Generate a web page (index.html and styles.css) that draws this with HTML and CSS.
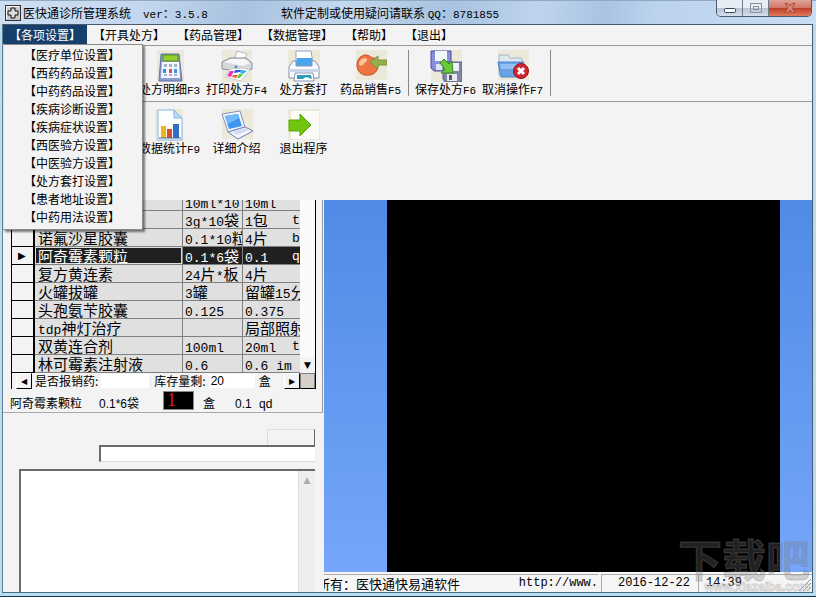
FILE: index.html
```
<!DOCTYPE html>
<html lang="zh-CN">
<head>
    <meta charset="UTF-8">
    <meta name="viewport" content="width=device-width, initial-scale=1.0">
    <title>医快通诊所管理系统</title>
    <link rel="stylesheet" href="styles.css">
</head>
<body>
    <div class="window">
        <header class="titlebar">
            <svg class="app-icon" viewBox="0 0 16 16">
                <rect x="0.5" y="0.5" width="15" height="15" fill="#c9c9c9" stroke="#333"/>
                <path d="M1.500 14V1.500H14" fill="none" stroke="#fff"/>
                <path d="M6 3h4v3h3v4h-3v3H6v-3H3V6h3z" fill="#ddd" stroke="#111"/>
            </svg>
            <h1>医快通诊所管理系统</h1>
            <span class="version"><span class="n">ver</span>：<span class="n">3.5.8</span></span>
            <span class="contact">软件定制或使用疑问请联系 <span class="n">QQ</span>：<span class="n">8781855</span></span>
            <div class="controls">
                <button class="ctl" aria-label="最小化">
                    <svg width="14" height="16" viewBox="0 0 14 16"><rect x="1.500" y="8.500" width="11" height="4" rx="1" fill="#fff" stroke="#3a4560"/></svg>
                </button>
                <button class="ctl" aria-label="最大化">
                    <svg width="14" height="16" viewBox="0 0 14 16"><g fill="none" stroke="#8a939d"><rect x="1.500" y="3.500" width="11" height="9"/><rect x="4.500" y="6.500" width="5" height="3"/></g></svg>
                </button>
                <button class="ctl ctl-close" aria-label="关闭">
                    <svg width="14" height="16" viewBox="0 0 14 16"><path d="M2 3.500h3l2 2.500 2-2.500h3L9 8l3 4.500H9L7 10l-2 2.500H2L5 8z" fill="#d98678" stroke="#b04a3c"/></svg>
                </button>
            </div>
        </header>

        <nav class="menubar">
            <div class="menu-root">
                <button class="menu active">【各项设置】</button>
                <div class="dropdown">
                    <button>【医疗单位设置】</button>
                    <button>【西药药品设置】</button>
                    <button>【中药药品设置】</button>
                    <button>【疾病诊断设置】</button>
                    <button>【疾病症状设置】</button>
                    <button>【西医验方设置】</button>
                    <button>【中医验方设置】</button>
                    <button>【处方套打设置】</button>
                    <button>【患者地址设置】</button>
                    <button>【中药用法设置】</button>
                </div>
            </div>
            <button class="menu">【开具处方】</button>
            <button class="menu">【药品管理】</button>
            <button class="menu">【数据管理】</button>
            <button class="menu">【帮助】</button>
            <button class="menu">【退出】</button>
        </nav>

        <div class="toolbar">
            <button class="tool">
                <svg viewBox="0 0 32 32">
                    <rect x="3" width="27" height="32" fill="#ece9da"/>
                    <path d="M7 4h18l3 27H5z" fill="#8d9ccb" stroke="#6272a5"/>
                    <path d="M8 12h17l1 16H7z" fill="#f4f6ff"/>
                    <rect x="9" y="5" width="15" height="6" fill="#8ecf2e" stroke="#5a9420"/>
                    <g fill="#a9b2c8"><path d="M10 14h3v3h-3zM15 14h3v3h-3zM20 14h3v3h-3zM10 24h3v2h-3zM15 24h3v2h-3zM20 24h3v2h-3z"/></g>
                    <path d="M9 19h3v4H9z" fill="#2f8fe0"/><path d="M15 19h3v4h-3z" fill="#e0563a"/><path d="M20 19h3v4h-3z" fill="#3b9adf"/>
                </svg>
                <span>处方明细<span class="n">F3</span></span>
            </button>
            <button class="tool">
                <svg viewBox="0 0 32 32">
                    <rect x="1" width="30" height="32" fill="#ece9da"/>
                    <path d="M13 11l3-10 10 3-5 10z" fill="#fdfdff" stroke="#b7b7c2"/>
                    <path d="M1 12l8-4h16l6 5v6l-7 3-23-3z" fill="#d7d8dc" stroke="#8a8b92"/>
                    <path d="M3 12l7-3h14l5 4-7 3z" fill="#f6f6f6"/>
                    <circle cx="15" cy="17" r="1.500" fill="#3aa0a0"/>
                    <path d="M9 19l13-1 7 2-9 11-16-4z" fill="#fff" stroke="#c9c9c9"/>
                    <path d="M9 21l4 0-3 6-4-1z" fill="#e33cb5"/><path d="M14 20l7 0-2 2-6 1z" fill="#3c54e8"/><path d="M21 20l5 1-4 3-3-1z" fill="#2bb6e8"/><path d="M22 24l-3 4-3 0 2-4z" fill="#4ed43a"/><path d="M12 25l5 0-2 3-4-1z" fill="#f1602e"/>
                </svg>
                <span>打印处方<span class="n">F4</span></span>
            </button>
            <button class="tool">
                <svg viewBox="0 0 32 32">
                    <rect width="32" height="31" fill="#ece9da"/>
                    <path d="M8 1h15l2 12H8z" fill="#fff" stroke="#8fa6c8"/>
                    <path d="M9 8h15v9H7z" fill="#49a3ee"/>
                    <path d="M1 17l4-6h3v5h16v-5h3l4 6v11H1z" fill="#f7faff" stroke="#8794b3"/>
                    <path d="M1 19h30v3H1z" fill="#cbd5e8"/>
                    <path d="M7 23h18l1 8H6z" fill="#fff" stroke="#8794b3"/>
                    <path d="M9 25h14l1 4-6-2-3 2-6 0z" fill="#2f9bb8"/>
                </svg>
                <span>处方套打</span>
            </button>
            <button class="tool">
                <svg viewBox="0 0 32 32">
                    <rect x="1" width="31" height="30" fill="#ece9da"/>
                    <path d="M2 15c0-6 4-10 9-10 4 0 5 3 7 3 4 0 5 3 5 7 0 6-4 10-9 10C6 26 2 21 2 15z" fill="#ee7443" stroke="#c94a22"/>
                    <path d="M4 13c1-4 5-6 8-4 1 3-3 3-4 6-2 1-4 1-4-2z" fill="#ffc7a0"/>
                    <path d="M15 12l8-6v4h9v5h-9v4z" fill="#93b04c" stroke="#7c973d"/>
                </svg>
                <span>药品销售<span class="n">F5</span></span>
            </button>
            <i class="sep"></i>
            <button class="tool">
                <svg viewBox="0 0 32 32">
                    <rect x="1" width="31" height="32" fill="#ece9da"/>
                    <path d="M1 1h20v20H4l-3-3z" fill="#8a90d8" stroke="#454ba0"/>
                    <path d="M5 1h12v10H5z" fill="#f3f8ff"/><path d="M6 14h9v6H6z" fill="#dfe3f4"/>
                    <path d="M13 12h19v20H15l-2-3z" fill="#8286a6" stroke="#5b5f85"/>
                    <path d="M19 13h10v8H19z" fill="#eef1f8"/><path d="M17 24h10v7H17z" fill="#e8e8ee"/><path d="M19 25h3v5h-3z" fill="#555a7c"/>
                    <path d="M10 13l4-4 5 5 3-3 1 12H11l4-4z" fill="#67c93a" stroke="#37891c"/>
                </svg>
                <span>保存处方<span class="n">F6</span></span>
            </button>
            <button class="tool">
                <svg viewBox="0 0 32 32">
                    <rect x="1" width="31" height="30" fill="#ece9da"/>
                    <path d="M2 5h9l2 3h12v17H2z" fill="#dfe7f1" stroke="#a8b6c8"/>
                    <path d="M1 12h26l-3 15H4z" fill="#6aa2e6" stroke="#4d84cc"/>
                    <path d="M3 14h22l-1 5H4z" fill="#92c0f3"/>
                    <circle cx="24" cy="21" r="7.500" fill="#cf2431" stroke="#8f1420"/>
                    <path d="M21 18l6 6M27 18l-6 6" stroke="#fff" stroke-width="3"/>
                </svg>
                <span>取消操作<span class="n">F7</span></span>
            </button>
            <i class="sep"></i>
        </div>

        <div class="toolbar toolbar-second">
            <button class="tool">
                <svg viewBox="0 0 32 32">
                    <rect x="1" width="28" height="32" fill="#ece9da"/>
                    <path d="M4 1h16l8 8v22H4z" fill="#fbfdff" stroke="#86b7e6"/>
                    <path d="M20 1v8h8z" fill="#b8dbf8" stroke="#86b7e6"/>
                    <path d="M7 17h5v12H7z" fill="#f0b41c"/><path d="M13 20h5v9h-5z" fill="#e0492f"/><path d="M19 15h6v14h-6z" fill="#2f6fc8"/>
                    <path d="M5 29h22" stroke="#4a6c9a"/>
                </svg>
                <span>数据统计<span class="n">F9</span></span>
            </button>
            <button class="tool">
                <svg viewBox="0 0 32 32">
                    <rect x="1" width="31" height="30" fill="#ece9da"/>
                    <path d="M1 5l18-3 5 16-17 5z" fill="#f1f5fd" stroke="#8392bf"/>
                    <path d="M4 7l13-2 4 12-13 3z" fill="#3d97ee"/>
                    <path d="M4 7l13-2 1 4-11 6z" fill="#73bbf8"/>
                    <path d="M7 23l17-5 8 4-15 8z" fill="#f4f7ff" stroke="#6f80b4"/>
                    <path d="M11 23l13-4 4 2-12 5z" fill="#d3dcf0"/>
                </svg>
                <span>详细介绍</span>
            </button>
            <button class="tool">
                <svg viewBox="0 0 32 32">
                    <rect width="32" height="31" fill="#ece9da"/>
                    <rect x="3" y="2" width="28" height="28" fill="#fbfcf9"/>
                    <path d="M1 11h11V5l11 11-11 11v-5H1z" fill="#72c50e" stroke="#5aa50a"/>
                </svg>
                <span>退出程序</span>
            </button>
        </div>

        <main>
            <section class="left">
                <div class="group">
                    <div class="grid-box">
                        <div class="grid-view">
                            <table>
                                <tbody>
                                    <tr><td class="mark"></td><td></td><td><span class="n">10ml*10</span></td><td><span class="n">10ml</span></td></tr>
                                    <tr><td class="mark"></td><td></td><td><span class="n">3g*10</span>袋</td><td><span class="n dose">t</span><span class="n">1</span>包</td></tr>
                                    <tr><td class="mark"></td><td>诺氟沙星胶囊</td><td><span class="n">0.1*10</span>粒</td><td><span class="n dose">b</span><span class="n">4</span>片</td></tr>
                                    <tr class="selected"><td class="mark">▶</td><td>阿奇霉素颗粒</td><td><span class="n">0.1*6</span>袋</td><td><span class="n dose">q</span><span class="n">0.1</span></td></tr>
                                    <tr><td class="mark"></td><td>复方黄连素</td><td><span class="n">24</span>片<span class="n">*</span>板</td><td><span class="n">4</span>片</td></tr>
                                    <tr><td class="mark"></td><td>火罐拔罐</td><td><span class="n">3</span>罐</td><td>留罐<span class="n">15</span>分</td></tr>
                                    <tr><td class="mark"></td><td>头孢氨苄胶囊</td><td><span class="n">0.125</span></td><td><span class="n">0.375</span></td></tr>
                                    <tr><td class="mark"></td><td><span class="n">tdp</span>神灯治疗</td><td></td><td>局部照射</td></tr>
                                    <tr><td class="mark"></td><td>双黄连合剂</td><td><span class="n">100ml</span></td><td><span class="n dose">t</span><span class="n">20ml</span></td></tr>
                                    <tr><td class="mark"></td><td>林可霉素注射液</td><td><span class="n">0.6</span></td><td><span class="n">0.6 im</span></td></tr>
                                </tbody>
                            </table>
                            <div class="vscroll"><button aria-label="向下滚动">▼</button></div>
                        </div>
                        <div class="stock">
                            <button class="arrow" aria-label="向左滚动">◀</button>
                            <label for="refund">是否报销药:</label>
                            <input id="refund" type="text">
                            <label for="stock">库存量剩:</label>
                            <input id="stock" type="text" value="20">
                            <span class="unit">盒</span>
                            <button class="arrow" aria-label="向右滚动">▶</button>
                            <i class="corner"></i>
                        </div>
                    </div>
                    <div class="current">
                        <span class="cur-name">阿奇霉素颗粒</span>
                        <span class="cur-spec">0.1*6袋</span>
                        <input class="qty" type="text" value="1" aria-label="数量">
                        <span class="cur-unit">盒</span>
                        <span class="cur-dose">0.1</span>
                        <span>qd</span>
                    </div>
                </div>
                <div class="entry">
                    <i class="tag"></i>
                    <input type="text" class="line" aria-label="录入">
                </div>
                <div class="memo">
                    <textarea aria-label="备注"></textarea>
                    <div class="memo-scroll">▲</div>
                </div>
            </section>

            <section class="right">
                <div class="stage"><div class="screen"></div></div>
                <footer class="statusbar">
                    <div class="panel panel-owner"><span>所有：医快通快易通软件</span><span class="mono">http://www.</span></div>
                    <div class="panel panel-date mono">2016-12-22</div>
                    <div class="panel panel-time mono">14:39</div>
                    <svg class="grip" viewBox="0 0 12 12"><path d="M0 12L12 0M4 12l8-8M8 12l4-4" stroke="#888" fill="none"/></svg>
                </footer>
            </section>
        </main>

        <div class="watermark">
            <b>下载吧</b>
            <span>www.xiazaiba.com</span>
        </div>
    </div>
</body>
</html>
```
FILE: styles.css
```
* {
    margin: 0;
    padding: 0;
    box-sizing: border-box;
}

body {
    font-family: "Noto Sans CJK SC", sans-serif;
    font-size: 12px;
    line-height: 16px;
    color: #000;
    background-color: #153f55;
}

button, input, textarea {
    font: inherit;
    color: inherit;
    border: none;
    border-radius: 0;
    background: none;
}

/* latin letters and digits */
.n {
    font-family: "Liberation Mono", monospace;
    font-size: 11px;
    line-height: 0;
}

.mono {
    font-family: "Liberation Mono", monospace;
    font-size: 12px;
}

.window {
    position: relative;
    display: flex;
    flex-direction: column;
    height: 100vh;
    min-height: 560px;
    overflow: hidden;
    padding: 0 3px 3px 2px;
    background-color: #b9dcee;
    border-bottom: 1px solid #12384c;
    white-space: nowrap;
}

/* title bar */
.titlebar {
    display: flex;
    align-items: center;
    height: 24px;
    padding-left: 5px;
    margin: 0 -3px 0 -2px;
    background: linear-gradient(100deg, #cfdff2 0%, #c3d6ee 18%, #a9c2e0 30%, #c3d7ef 42%, #a8c2e0 55%, #bfd4ee 66%, #a9c3e2 74%, #bcd3ee 80%, #c8dcf3 100%);
    border-top: 1px solid #8fa9bd;
}

.app-icon {
    width: 16px;
    height: 16px;
    margin-right: 2px;
}

.titlebar h1 {
    font-size: 12px;
    font-weight: normal;
}

.version {
    margin-left: 12px;
    width: 138px;
}

.controls {
    display: flex;
    align-self: flex-start;
    margin: -1px 4px 0 auto;
    border: 1px solid #4d5a6b;
    border-top: none;
    border-radius: 0 0 5px 5px;
    overflow: hidden;
}

.ctl {
    display: flex;
    justify-content: center;
    width: 26px;
    height: 16px;
    background: linear-gradient(#e6edf5 50%, #b5c2d2 50%, #d5e0ec);
    border-right: 1px solid #6f7c8d;
}

.ctl-close {
    width: 42px;
    border-right: none;
    background: linear-gradient(#e0a498 0%, #d27565 50%, #bd3c27 50%, #df7a5c);
}

/* menu */
.menubar {
    display: flex;
    height: 22px;
    background-color: #f3f3f3;
    border-top: 1px solid #47596a;
    border-bottom: 1px solid #999;
    border-left: 1px solid #5f7f98;
    border-right: 1px solid #47596a;
}

.menu {
    height: 19px;
    padding: 0 6px;
}

.menu.active {
    color: #fff;
    background-color: #163f6b;
}

.menu-root {
    position: relative;
}

.dropdown {
    position: absolute;
    z-index: 5;
    top: 19px;
    left: 0;
    width: 140px;
    padding: 1px 0 3px;
    background-color: #f3f3f3;
    border: 1px solid #8a8a8a;
    border-left-color: #ddd;
    box-shadow: 2px 2px 2px rgba(0, 0, 0, 0.5);
}

.dropdown button {
    display: block;
    width: 100%;
    height: 18px;
    padding-left: 20px;
    text-align: left;
}

/* toolbars */
.toolbar {
    display: flex;
    height: 56px;
    padding: 4px 0 0 133px;
    background-color: #f3f3f3;
    border-bottom: 1px solid #999;
    border-left: 1px solid #5f7f98;
    border-right: 1px solid #47596a;
}

.toolbar-second {
    height: 98px;
    padding-top: 7px;
    border-bottom: none;
}

.tool {
    display: flex;
    flex-direction: column;
    align-items: center;
    width: 67px;
    height: 46px;
    line-height: 13px;
}

.tool svg {
    width: 32px;
    height: 32px;
}

.sep {
    width: 1px;
    height: 46px;
    margin: 0 3px 0 4px;
    background-color: #888;
}

/* main area */
main {
    display: flex;
    flex: 1;
    min-height: 0;
    background-color: #f3f3f3;
    border-left: 1px solid #5f7f98;
    border-right: 1px solid #47596a;
    border-bottom: 1px solid #3a7186;
}

.left {
    display: flex;
    flex-direction: column;
    width: 321px;
}

.group {
    width: 320px;
    padding-left: 8px;
    border-right: 1px solid #999;
    border-bottom: 1px solid #aaa;
}

.grid-box {
    width: 305px;
    border-left: 1px solid #000;
    border-right: 1px solid #000;
}

.grid-view {
    display: flex;
    align-items: flex-end;
    height: 173px;
    overflow: hidden;
}

table {
    width: 288px;
    table-layout: fixed;
    border-collapse: separate;
    border-spacing: 0;
    font-size: 15px;
    line-height: 17px;
}

td {
    height: 18px;
    padding-left: 2px;
    overflow: hidden;
    background-color: #e0e0e0;
    border-right: 1px solid #808080;
    border-bottom: 1px solid #808080;
}

td:nth-child(1) { width: 23px; }
td:nth-child(2) { width: 148px; padding-left: 3px; }
td:nth-child(3) { width: 60px; }
td:nth-child(4) { border-right: none; }

td .n {
    font-size: 13px;
}

td .dose {
    float: right;
    width: 8px;
    line-height: 20px;
    margin-bottom: -3px;
}

td.mark {
    font-family: "DejaVu Sans", sans-serif;
    font-size: 10px;
    padding-left: 6px;
    color: #000;
    background-color: #f3f3f3;
    border-color: #000;
    border-right-width: 2px;
}

.selected td {
    color: #fff;
    background-color: #202020;
}

.selected td.mark {
    color: #000;
    background-color: #f3f3f3;
}

.selected td:nth-child(2) {
    box-shadow: inset 1px 1px #ddd, inset -1px -1px #ddd;
}

.vscroll {
    display: flex;
    flex: 1;
    align-items: flex-end;
    align-self: stretch;
    background-color: #fafafa;
}

.vscroll button {
    width: 100%;
    height: 16px;
    font-family: "DejaVu Sans", sans-serif;
    font-size: 9px;
    background-color: #f3f3f3;
}

.stock {
    display: flex;
    align-items: center;
    height: 16px;
    padding-left: 4px;
}

.stock input {
    height: 14px;
    background-color: #fff;
    font-family: "Liberation Sans", sans-serif;
}

.stock #refund {
    width: 48px;
    margin: 0 5px 0 3px;
}

.stock #stock {
    width: 46px;
    margin-left: 3px;
    padding-left: 2px;
}

.unit {
    margin: 0 auto 0 4px;
}

.arrow {
    width: 16px;
    height: 16px;
    margin-right: 3px;
    font-family: "DejaVu Sans", sans-serif;
    font-size: 8px;
    background-color: #f3f3f3;
    border: 1px solid #fff;
    border-right-color: #000;
    border-bottom-color: #000;
}

.unit + .arrow {
    margin-right: 0;
}

.corner {
    width: 15px;
    height: 16px;
    background-color: #d4d0c8;
    border: 1px solid #808080;
    border-bottom-color: #000;
}

.current {
    display: flex;
    align-items: center;
    height: 23px;
    padding-top: 6px;
    margin-left: -1px;
    font-family: "Liberation Sans", "Noto Sans CJK SC", sans-serif;
}

.cur-name { width: 89px; }
.cur-spec { width: 64px; }
.cur-unit { width: 32px; }
.cur-dose { width: 24px; }

.qty {
    width: 31px;
    height: 19px;
    margin: -7px 9px 0 0;
    padding-left: 3px;
    font-family: "Liberation Serif", serif;
    font-size: 18px;
    color: #e01818;
    background-color: #000;
    border: 1px solid #888;
}

.entry {
    display: flex;
    flex-direction: column;
    align-items: flex-end;
    padding: 16px 9px 7px 96px;
}

.tag {
    width: 48px;
    height: 16px;
    border: 1px solid #ddd;
    border-right: 1px solid #666;
    border-bottom: none;
}

.line {
    width: 100%;
    height: 17px;
    background-color: #fff;
    border-top: 2px solid #6a6a6a;
    border-left: 2px solid #6a6a6a;
    border-bottom: 1px solid #ddd;
}

.memo {
    display: flex;
    flex: 1;
    min-height: 0;
    margin: 0 9px 0 16px;
    border-top: 2px solid #6a6a6a;
    border-left: 2px solid #6a6a6a;
}

.memo textarea {
    flex: 1;
    resize: none;
    background-color: #fff;
}

.memo-scroll {
    width: 17px;
    padding-top: 1px;
    text-align: center;
    font-family: "DejaVu Sans", sans-serif;
    font-size: 9px;
    color: #aaa;
    background-color: #eee;
    border-left: 1px solid #ddd;
}

.right {
    display: flex;
    flex: 1;
    flex-direction: column;
    min-width: 0;
}

.stage {
    display: flex;
    flex: 1;
    padding: 0 32px 0 63px;
    background: linear-gradient(#4f8be6, #75a6fa);
}

.screen {
    flex: 1;
    background-color: #000;
}

/* status bar */
.statusbar {
    display: flex;
    position: relative;
    height: 20px;
    padding-top: 2px;
    background-color: #f5f5f5;
}

.panel {
    line-height: 17px;
    border-top: 1px solid #aaa;
}

.panel-owner {
    display: flex;
    flex: 1;
    justify-content: space-between;
    min-width: 0;
    overflow: hidden;
    margin-right: 3px;
    font-size: 13px;
}

/* the first caption starts under the panel edge */
.panel-owner span:first-child {
    margin-left: -7px;
}

.panel-date {
    width: 97px;
    padding-left: 16px;
    border-left: 1px solid #aaa;
}

.panel-time {
    width: 114px;
    padding-left: 7px;
    border-left: 1px solid #aaa;
}

.grip {
    position: absolute;
    right: 1px;
    bottom: 1px;
    width: 12px;
    height: 12px;
}

.watermark {
    position: absolute;
    right: 6px;
    bottom: 3px;
    display: flex;
    flex-direction: column;
    align-items: flex-end;
    pointer-events: none;
}

.watermark b {
    font-size: 44px;
    line-height: 46px;
    color: rgba(120, 120, 120, 0.28);
    -webkit-text-stroke: 1px rgba(130, 130, 130, 0.35);
}

.watermark span {
    font-family: "Liberation Sans", sans-serif;
    font-size: 12px;
    font-weight: bold;
    line-height: 12px;
    color: rgba(255, 255, 255, 0.6);
    -webkit-text-stroke: 1px rgba(150, 150, 150, 0.4);
}
```
